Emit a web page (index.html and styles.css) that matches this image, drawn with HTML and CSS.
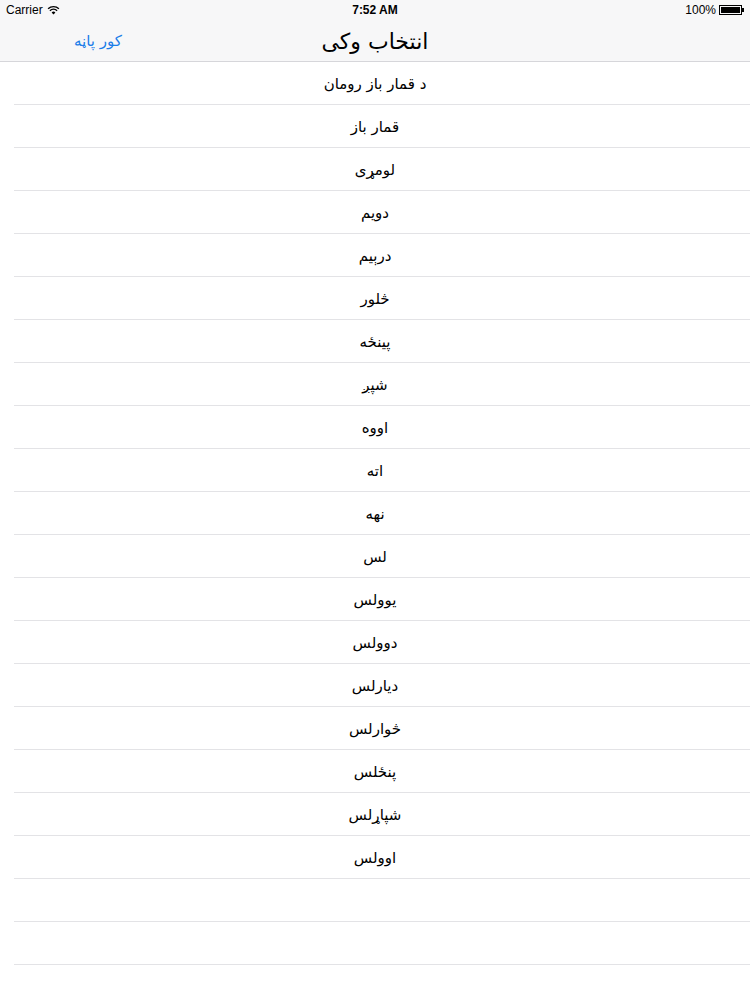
FILE: index.html
```html
<!DOCTYPE html>
<html lang="ps">
<head>
<meta charset="utf-8">
<title>انتخاب وکی</title>
<link rel="stylesheet" href="styles.css">
</head>
<body>
<header class="bar">
  <div class="status">
    <div class="status-left">
      <span>Carrier</span>
      <svg class="wifi" width="13" height="10" viewBox="0 0 13 10" aria-hidden="true">
        <path d="M6.5 9.5 L4.6 7.4 A2.7 2.7 0 0 1 8.4 7.4 Z" fill="#000"/>
        <path d="M2.9 5.7 A5.2 5.2 0 0 1 10.1 5.7" fill="none" stroke="#000" stroke-width="1.4"/>
        <path d="M1.1 3.8 A7.8 7.8 0 0 1 11.9 3.8" fill="none" stroke="#000" stroke-width="1.4"/>
      </svg>
    </div>
    <div class="status-time">7:52 AM</div>
    <div class="status-right">
      <span>100%</span>
      <span class="battery"><span class="battery-fill"></span></span>
      <span class="battery-tip"></span>
    </div>
  </div>
  <nav class="nav">
    <a class="back" dir="rtl">کور پاڼه</a>
    <h1 class="title" dir="rtl">انتخاب وکی</h1>
  </nav>
</header>
<ul class="list" dir="rtl">
  <li class="row">د قمار باز رومان</li>
  <li class="row">قمار باز</li>
  <li class="row">لومړی</li>
  <li class="row">دويم</li>
  <li class="row">درېيم</li>
  <li class="row">څلور</li>
  <li class="row">پينځه</li>
  <li class="row">شپږ</li>
  <li class="row">اووه</li>
  <li class="row">اته</li>
  <li class="row">نهه</li>
  <li class="row">لس</li>
  <li class="row">يوولس</li>
  <li class="row">دوولس</li>
  <li class="row">ديارلس</li>
  <li class="row">څوارلس</li>
  <li class="row">پنځلس</li>
  <li class="row">شپاړلس</li>
  <li class="row">اوولس</li>
  <li class="row empty"></li>
  <li class="row empty"></li>
</ul>
</body>
</html>
```
FILE: styles.css
```css
html, body {
  margin: 0;
  padding: 0;
  background: #ffffff;
}
body {
  width: 750px;
  font-family: "DejaVu Sans", "Liberation Sans", sans-serif;
  color: #000;
}
.bar {
  background: #f7f7f8;
  border-bottom: 1px solid #d6d6da;
}
.status {
  height: 20px;
  display: flex;
  align-items: center;
  justify-content: space-between;
  padding: 0 6px;
  font-family: "Liberation Sans", Arial, sans-serif;
  font-size: 12px;
}
.status-left {
  display: flex;
  align-items: center;
  gap: 4px;
  width: 120px;
}
.status-time {
  font-weight: bold;
  font-size: 12px;
}
.status-right {
  display: flex;
  align-items: center;
  justify-content: flex-end;
  width: 120px;
  gap: 3px;
}
.battery {
  display: inline-block;
  width: 23px;
  height: 10px;
  border: 1px solid #000;
  box-sizing: border-box;
  padding: 1px;
}
.battery-fill {
  display: block;
  width: 100%;
  height: 100%;
  background: #000;
}
.battery-tip {
  display: inline-block;
  width: 2px;
  height: 4px;
  background: #000;
  margin-left: -3px;
}
.nav {
  height: 41px;
  display: flex;
  align-items: center;
  justify-content: center;
  position: relative;
}
.title {
  margin: 0;
  font-size: 22px;
  font-weight: normal;
  line-height: 1;
  padding-top: 3px;
}
.back {
  position: absolute;
  left: 74px;
  top: 12px;
  color: #1a7de8;
  font-size: 15px;
}
.list {
  list-style: none;
  margin: 0;
  padding: 0;
}
.row {
  margin-left: 14px;
  padding-right: 14px;
  padding-top: 2px;
  box-sizing: border-box;
  height: 43px;
  border-bottom: 1px solid #e3e3e6;
  display: flex;
  align-items: center;
  justify-content: center;
  font-size: 15px;
}
```
